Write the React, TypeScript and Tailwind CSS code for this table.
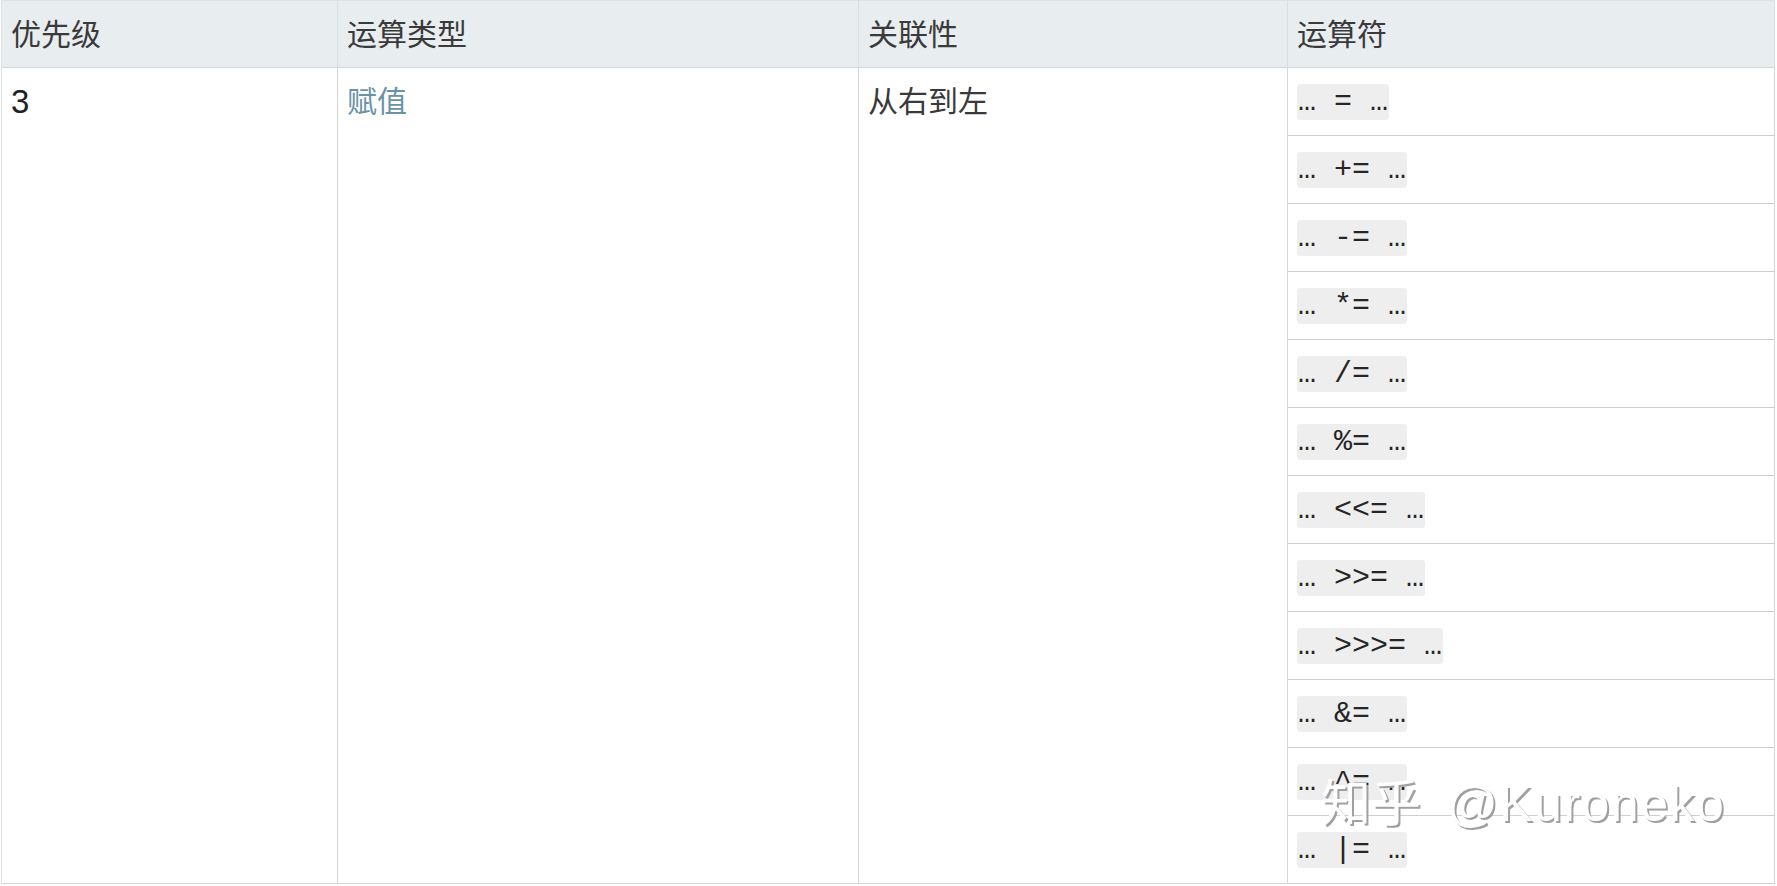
const ops = ['=', '+=', '-=', '*=', '/=', '%=', '<<=', '>>=', '>>>=', '&=', '^=', '|=']

const sans = 'font-["Liberation_Sans","Noto_Sans_CJK_SC",sans-serif]'

function HeadCell({ label, last }: { label: string; last?: boolean }) {
  return (
    <div
      className={`flex h-[67px] items-center border-b border-[#d3d6d8] px-[9px] text-[#3a3a3a] ${
        last ? 'border-r border-[#d6d6d6]' : 'border-r'
      }`}
    >
      {label}
    </div>
  )
}

function OpRow({ op }: { op: string }) {
  return (
    <div className="flex h-[68px] items-center border-b border-[#cfcfcf] px-[9px]">
      <code className='rounded-[3px] bg-[#eeeeee] px-px font-["Liberation_Mono","DejaVu_Sans_Mono",monospace] text-[30px] leading-[36px] whitespace-pre text-[#262626]'>
        {`…\u00a0${op}\u00a0…`}
      </code>
    </div>
  )
}

export default function App() {
  return (
    <div className={`relative min-h-screen bg-white ${sans} text-[30px]`}>
      <div className="ml-px w-[1774px] border-t border-l border-[#dde3e6]">
        <div className="grid grid-cols-[336px_521px_429px_487px] bg-[#e8edf0] [&>div]:border-r-[#d9dee1]">
          <HeadCell label="优先级" />
          <HeadCell label="运算类型" />
          <HeadCell label="关联性" />
          <HeadCell label="运算符" last />
        </div>
        <div className="grid grid-cols-[336px_521px_429px_487px]">
          <div className="border-r border-b border-[#d6d6d6] px-[9px]">
            <div className="flex h-[67px] items-center text-[#222]">
              <span className="text-[33px]">3</span>
            </div>
          </div>
          <div className="border-r border-b border-[#d6d6d6] px-[9px]">
            <div className="flex h-[67px] items-center text-[#6a93a8]">赋值</div>
          </div>
          <div className="border-r border-b border-[#d6d6d6] px-[9px]">
            <div className="flex h-[67px] items-center text-[#3a3a3a]">从右到左</div>
          </div>
          <div className="border-r border-[#d6d6d6]">
            {ops.map((op) => (
              <OpRow key={op} op={op} />
            ))}
          </div>
        </div>
      </div>

      {/* zhihu watermark */}
      <div className="pointer-events-none absolute top-[779px] left-[1321px] flex items-baseline text-[50px] leading-none text-white [text-shadow:2px_2px_0_#a0a0a0]">
        <span>知乎</span>
        <span className="ml-[26px] tracking-[1.5px]">@Kuroneko</span>
      </div>
    </div>
  )
}
